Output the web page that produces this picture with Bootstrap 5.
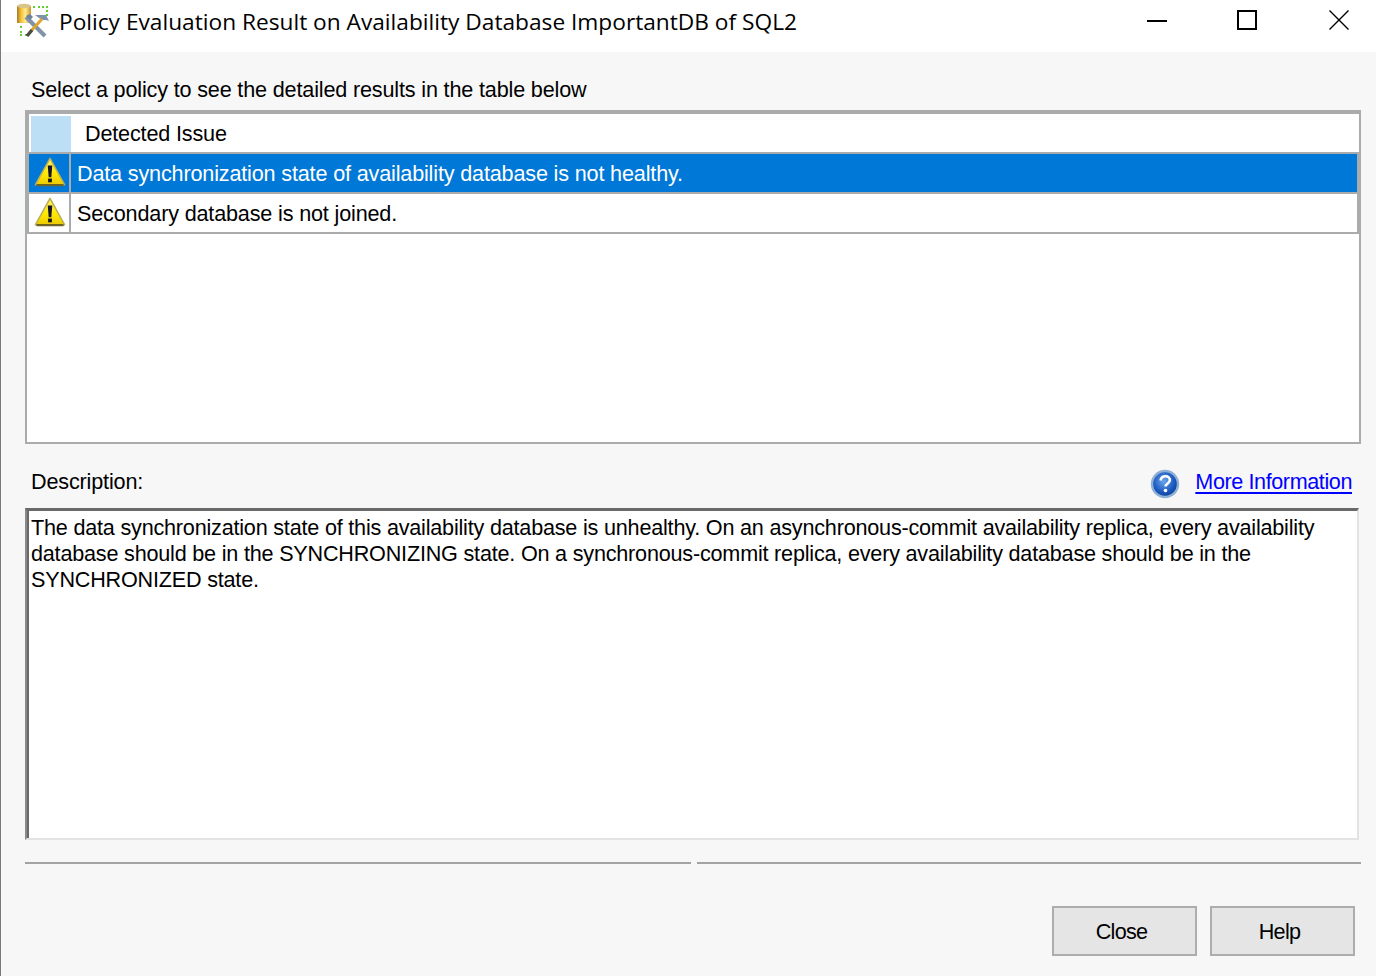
<!DOCTYPE html>
<html lang="en">
<head>
<meta charset="utf-8">
<title>Policy Evaluation Result</title>
<link href="https://cdn.jsdelivr.net/npm/bootstrap@5.3.0/dist/css/bootstrap.min.css" rel="stylesheet">
<style>
html,body{margin:0;height:976px;overflow:hidden}
body{background:#f7f7f7;color:#000;font-family:"Liberation Sans",Arial,sans-serif;font-size:21.6px;letter-spacing:-.16px;line-height:26px}
.win{height:976px;border-left:1px solid #7a7a7a}
.titlebar{height:52px;background:#fff;padding-left:16px}
.titletext{font-family:"Open Sans","Noto Sans",sans-serif;font-size:22.7px;letter-spacing:0;line-height:43px;margin-left:8px;color:#000}
.winbtns{margin-left:auto;height:40px}
.winbtn{width:20px;height:20px;display:block}
.btn-gap-a{margin-left:70px}
.btn-gap-b{margin-left:72px;margin-right:27px}
.content{padding:0 15px 0 24px}
.lbl{height:58px;padding:25px 0 0 6px}
.gridbox{height:334px;background:#fff;border:2px solid #a9abad}
.issue-table{width:100%;border-collapse:separate;border-spacing:0;table-layout:fixed;margin:0}
.issue-table td{padding:2px 0 0 0;height:40px;vertical-align:middle;border-bottom:2px solid #a9abad;white-space:nowrap}
.issue-table .iconcell{width:44px;border-left:2px solid #a9abad;border-right:2px solid #a9abad;text-align:center;padding:0}
.issue-table .hdr td{height:42px;border-top:2px solid #a9abad}
.issue-table .hdr td.hdrcell{border-right:0;padding:2px 0 0 2px;vertical-align:top}
.hdrfill{height:36px;background:#bcdff5}
.issue-table td.txt{padding-left:6px;border-right:2px solid #a9abad}
.issue-table .hdr td.txt{padding-left:14px;padding-top:1px;border-right:0}
.issue-table tr.sel td{background:#0078d7;color:#fff}
.warn{display:block;margin:0 0 2px 5px}
.descrow{height:64px;padding:12px 9px 0 6px}
.infoicon{margin-top:4px}
.morelink{color:#00f;letter-spacing:-.41px;text-decoration:underline;text-underline-offset:3px;margin-left:15px}
.descbox{height:332px;width:1334px;background:#fff;border:solid;border-width:3px 2px 2px 2px;border-color:#696969 #e3e3e3 #e3e3e3 #8a8a8a;box-shadow:inset 2px 0 0 #696969;padding:4px 20px 0 4px;line-height:26px;letter-spacing:-.2px}
.sepline{height:2px;background:#a3a3a3;margin-top:22px}
.sep-a{width:666px}
.seprow{gap:6px}
.footbtns{margin-top:42px;gap:13px;padding-right:6px}
.wbtn{width:145px;height:50px;background:#e5e5e5;border:2px solid #adadad;border-radius:0;font-size:21.6px;letter-spacing:-.7px;line-height:26px;color:#000;padding:2px 6px 0 0}
.wbtn:hover{background:#e5e5e5;border-color:#adadad;color:#000}
</style>
</head>
<body>
<div class="win">
  <div class="titlebar d-flex align-items-start">
    <svg width="34" height="38" viewBox="0 0 34 38" class="flex-shrink-0" aria-hidden="true">
      <defs><linearGradient id="dbg" x1="0" y1="0" x2="1" y2="0"><stop offset="0" stop-color="#a87b24"/><stop offset="0.3" stop-color="#f5c33a"/><stop offset="0.6" stop-color="#ffeb90"/><stop offset="1" stop-color="#c9952c"/></linearGradient></defs>
      <g fill="#5fd030">
        <rect x="16" y="6" width="2" height="2"/><rect x="21" y="6" width="2" height="2"/><rect x="25" y="6" width="2" height="2"/><rect x="29" y="6" width="2" height="2"/>
        <rect x="29" y="10" width="2" height="2"/><rect x="29" y="14" width="2" height="2"/>
        <rect x="3" y="26" width="2" height="2"/><rect x="3" y="31" width="2" height="2"/><rect x="3" y="34" width="2" height="2"/><rect x="8" y="34" width="2" height="2"/>
      </g>
      <rect x="0" y="6" width="14" height="17" fill="url(#dbg)"/>
      <ellipse cx="7" cy="6" rx="7" ry="2.2" fill="#d9c48a"/>
      <path d="M9 17l19 19" stroke="#7f93ab" stroke-width="4" fill="none"/>
      <path d="M9 16l4-2 3 3-3 3z" fill="#6f8298"/>
      <path d="M18 15h11l3 6-3-1-3 0-4-2z" fill="#7f93ab"/>
      <path d="M14 31l11-12" stroke="#e0a52c" stroke-width="3" fill="none"/>
      <path d="M10 36l5-6" stroke="#4a4a44" stroke-width="3.4" fill="none"/>
    </svg>
    <div class="titletext">Policy Evaluation Result on Availability Database ImportantDB of SQL2</div>
    <div class="winbtns d-flex align-items-center">
      <svg class="winbtn" viewBox="0 0 20 20" aria-hidden="true"><rect x="0" y="10" width="20" height="2" fill="#000"/></svg>
      <svg class="winbtn btn-gap-a" viewBox="0 0 20 20" aria-hidden="true"><rect x="1" y="1" width="18" height="18" fill="none" stroke="#000" stroke-width="2"/></svg>
      <svg class="winbtn btn-gap-b" viewBox="0 0 20 20" aria-hidden="true"><path d="M0.5 0.5l19 19M19.5 0.5l-19 19" stroke="#000" stroke-width="1.4" fill="none"/></svg>
    </div>
  </div>
  <div class="content">
    <div class="lbl">Select a policy to see the detailed results in the table below</div>
    <div class="gridbox">
      <table class="issue-table">
        <tr class="hdr"><td class="hdrcell iconcell"><div class="hdrfill"></div></td><td class="txt">Detected Issue</td></tr>
        <tr class="sel"><td class="iconcell"><svg class="warn" width="32" height="30" viewBox="0 0 34 32" aria-hidden="true"><use href="#warnicon"/></svg></td><td class="txt">Data synchronization state of availability database is not healthy.</td></tr>
        <tr><td class="iconcell"><svg class="warn" width="32" height="30" viewBox="0 0 34 32" aria-hidden="true"><use href="#warnicon"/></svg></td><td class="txt">Secondary database is not joined.</td></tr>
      </table>
    </div>
    <div class="descrow d-flex align-items-center">
      <span>Description:</span>
      <svg class="ms-auto infoicon" width="30" height="30" viewBox="0 0 30 30" aria-hidden="true">
        <defs><radialGradient id="ib" cx="45%" cy="40%" r="60%"><stop offset="0" stop-color="#6aa7ee"/><stop offset="0.65" stop-color="#1f5cc0"/><stop offset="1" stop-color="#0d3f96"/></radialGradient></defs>
        <circle cx="15" cy="15" r="13" fill="url(#ib)" stroke="#8fb0d6" stroke-width="2.4"/>
        <path d="M10.5 11.5c.6-3 3-4.2 5-4.2 2.6 0 4.4 1.6 4.4 3.8 0 3.2-4.3 3.4-4.3 6.4" fill="none" stroke="#fff" stroke-width="2.6"/>
        <circle cx="15.5" cy="21.5" r="1.8" fill="#fff"/>
      </svg>
      <a href="#" class="morelink">More Information</a>
    </div>
    <div class="descbox">The data synchronization state of this availability database is unhealthy. On an asynchronous-commit availability replica, every availability database should be in the SYNCHRONIZING state. On a synchronous-commit replica, every availability database should be in the SYNCHRONIZED state.</div>
    <div class="seprow d-flex">
      <div class="sepline sep-a"></div>
      <div class="sepline flex-grow-1"></div>
    </div>
    <div class="footbtns d-flex justify-content-end">
      <button type="button" class="btn wbtn">Close</button>
      <button type="button" class="btn wbtn">Help</button>
    </div>
  </div>
</div>
<svg width="0" height="0" class="d-block" aria-hidden="true">
  <defs>
    <linearGradient id="wg" x1="0" y1="0" x2="0" y2="1"><stop offset="0" stop-color="#fff26a"/><stop offset="0.6" stop-color="#ffe800"/><stop offset="1" stop-color="#eccb00"/></linearGradient>
    <symbol id="warnicon" viewBox="0 0 34 32">
      <path d="M17 1.5L32.5 29.5H1.5z" fill="url(#wg)" stroke="#b8ae58" stroke-width="1.6" stroke-linejoin="round"/>
      <path d="M2.5 30h29" stroke="#6e6426" stroke-width="2.4"/>
      <path d="M14.6 9h4.8l-1 12.5h-2.8z" fill="#14142c"/>
      <rect x="15" y="23" width="4" height="4" fill="#14142c"/>
    </symbol>
  </defs>
</svg>
</body>
</html>
